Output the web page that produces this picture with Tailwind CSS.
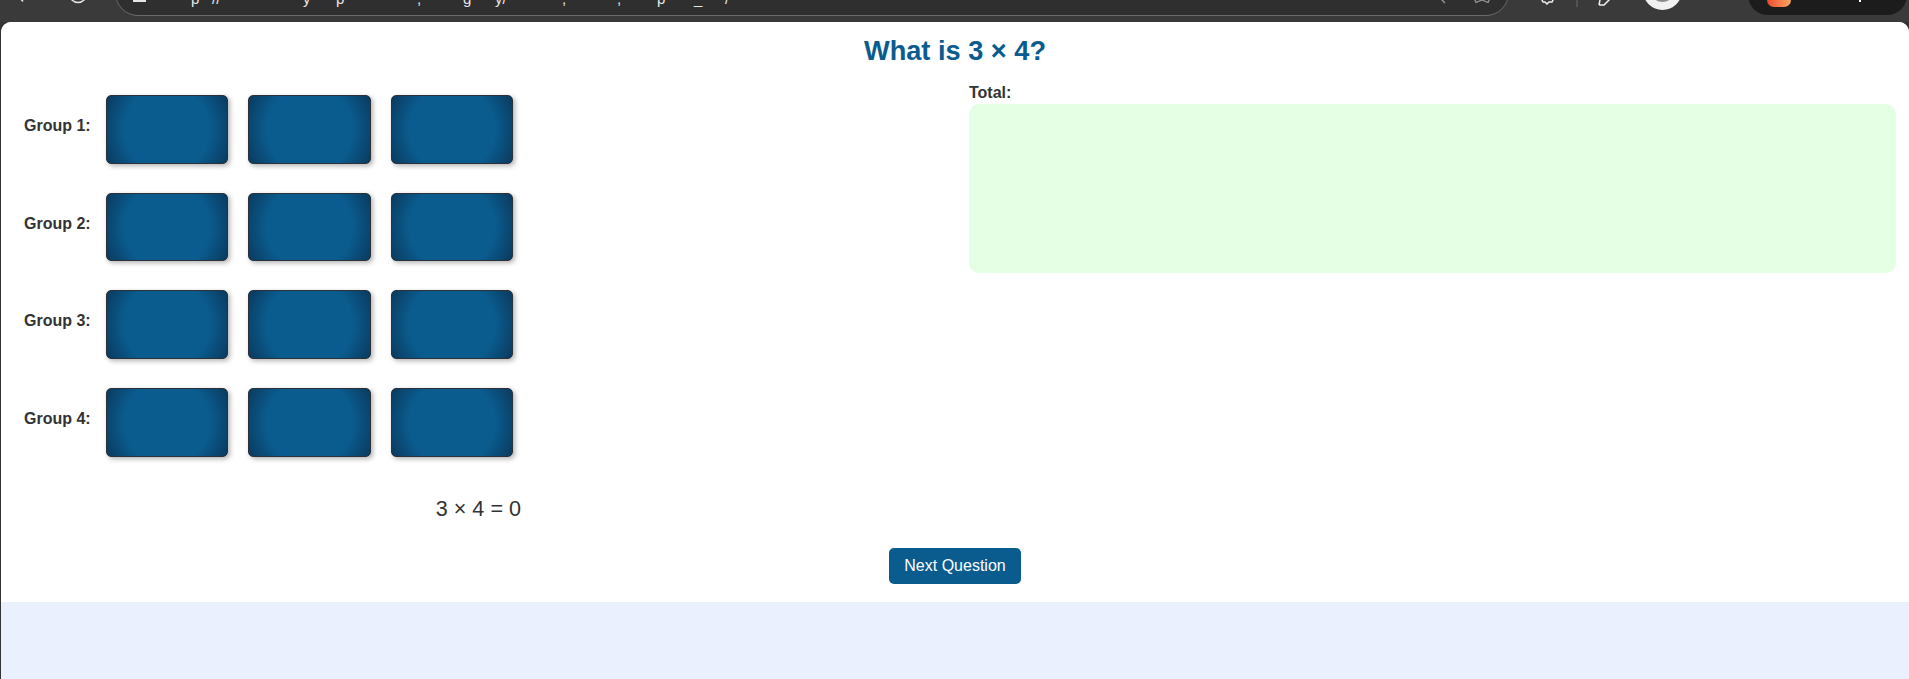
<!DOCTYPE html>
<html lang="en">
<head>
  <meta charset="UTF-8">
  <meta name="viewport" content="width=device-width, initial-scale=1.0">
  <title>What is 3 × 4?</title>
  <script src="https://cdn.jsdelivr.net/npm/@tailwindcss/browser@4"></script>
</head>
<body class="h-screen overflow-hidden flex flex-col bg-[#3a3a3a] font-['Liberation_Sans',Arial,sans-serif]">

  <!-- Browser toolbar, cut off by the top edge of the capture -->
  <div class="relative h-[22px] shrink-0 overflow-hidden bg-[#3a3a3a]">
    <!-- back / reload -->
    <svg class="absolute left-[14px] top-0" width="76" height="6" fill="none" stroke="#e8e8e8" stroke-width="1.5">
      <path d="M5 -3 L9 1.5" />
      <circle cx="64" cy="-6" r="8.5" />
    </svg>

    <!-- Address bar -->
    <div class="absolute left-[115px] top-[-30px] w-[1394px] h-[46px] rounded-[23px] border border-[#6b6b6b] bg-[#2f2f2f] overflow-hidden text-[#e6e6e6] text-[15px] leading-[20px]">
      <div class="absolute left-[17px] bottom-[13px] w-[13px] h-[2px] bg-[#e6e6e6]"></div>
      <span class="absolute left-[75px] bottom-[6px]">p</span>
      <span class="absolute left-[96px] bottom-[6px]">//</span>
      <span class="absolute left-[187px] bottom-[6px]">y</span>
      <span class="absolute left-[220px] bottom-[6px]">p</span>
      <span class="absolute left-[301px] bottom-[6px]">,</span>
      <span class="absolute left-[347px] bottom-[6px]">g</span>
      <span class="absolute left-[379px] bottom-[6px]">y/</span>
      <span class="absolute left-[446px] bottom-[6px]">,</span>
      <span class="absolute left-[501px] bottom-[6px]">,</span>
      <span class="absolute left-[541px] bottom-[6px]">p</span>
      <span class="absolute left-[578px] bottom-[6px]">_</span>
      <span class="absolute left-[609px] bottom-[6px]">/</span>
    </div>

    <!-- star and chevron at the end of the address bar -->
    <svg class="absolute left-[1436px] top-0" width="60" height="6" fill="none" stroke="#9a9a9a" stroke-width="1.3">
      <path d="M9 -3 L6 0 L9 3" />
      <path d="M38 -2 L40 2.5 L46 0 L52 2.5 L54 -2" />
    </svg>

    <!-- extension, divider, pen -->
    <svg class="absolute left-[1538px] top-0" width="80" height="8" fill="none" stroke="#f0f0f0" stroke-width="1.5">
      <path d="M3 -2 L5 2 L7 2 L9 4 L11 2 L14 2 L16 -2" />
      <path d="M39 -1 L39 7" stroke="#6d6d6d" stroke-width="1" />
      <path d="M61 5 L66 5 L72 -1 M61 5 L62 0" />
    </svg>

    <!-- Profile picture -->
    <div class="absolute left-[1643px] top-[-29px] w-[39px] h-[39px] rounded-full bg-[#f1f1f1] flex items-center justify-center">
      <div class="w-[25px] h-[25px] mt-[-3px] rounded-full bg-[#8c8c8c]"></div>
    </div>

    <!-- Dark pill on the far right -->
    <div class="absolute left-[1748px] top-[-30px] w-[159px] h-[45px] rounded-[20px] bg-[#1c1c1c]">
      <div class="absolute left-[19px] bottom-[8px] w-[24px] h-[12px] rounded-b-[7px] bg-gradient-to-r from-[#ea4b2a] via-[#f9784a] to-[#f7a75c]"></div>
      <div class="absolute left-[111px] bottom-[13px] w-[2px] h-[4px] bg-white"></div>
    </div>
  </div>

  <!-- Page area -->
  <div class="flex-1 pl-px bg-[#333333]">
    <div class="h-full rounded-t-[10px] overflow-hidden bg-[#ebf0fe]">
      <div class="h-[580px] bg-white pt-[13px] text-[#333333]">
        <h1 class="text-center text-[27.2px] leading-[31px] font-bold text-[#0a5c8f]">What is 3 × 4?</h1>

        <div class="flex mt-[18px] pl-[23px] pr-[13px]">
          <!-- Groups of cards -->
          <div class="w-[945px] shrink-0">
            <div class="w-[497px] pt-[11px]">
              <div class="flex flex-col gap-[29px]">
                <div class="flex">
                  <div class="w-[82px] pt-[22px] text-base leading-[18px] font-bold">Group 1:</div>
                  <div class="flex gap-5">
                    <div class="w-[122.33px] h-[68.67px] rounded-[5px] border border-[#2b3138] shadow-[2px_2px_5px_rgba(0,0,0,0.3)] bg-[radial-gradient(circle,#0a5c8f_62%,#0a3a5e_100%)]"></div>
                    <div class="w-[122.33px] h-[68.67px] rounded-[5px] border border-[#2b3138] shadow-[2px_2px_5px_rgba(0,0,0,0.3)] bg-[radial-gradient(circle,#0a5c8f_62%,#0a3a5e_100%)]"></div>
                    <div class="w-[122.33px] h-[68.67px] rounded-[5px] border border-[#2b3138] shadow-[2px_2px_5px_rgba(0,0,0,0.3)] bg-[radial-gradient(circle,#0a5c8f_62%,#0a3a5e_100%)]"></div>
                  </div>
                </div>
                <div class="flex">
                  <div class="w-[82px] pt-[22px] text-base leading-[18px] font-bold">Group 2:</div>
                  <div class="flex gap-5">
                    <div class="w-[122.33px] h-[68.67px] rounded-[5px] border border-[#2b3138] shadow-[2px_2px_5px_rgba(0,0,0,0.3)] bg-[radial-gradient(circle,#0a5c8f_62%,#0a3a5e_100%)]"></div>
                    <div class="w-[122.33px] h-[68.67px] rounded-[5px] border border-[#2b3138] shadow-[2px_2px_5px_rgba(0,0,0,0.3)] bg-[radial-gradient(circle,#0a5c8f_62%,#0a3a5e_100%)]"></div>
                    <div class="w-[122.33px] h-[68.67px] rounded-[5px] border border-[#2b3138] shadow-[2px_2px_5px_rgba(0,0,0,0.3)] bg-[radial-gradient(circle,#0a5c8f_62%,#0a3a5e_100%)]"></div>
                  </div>
                </div>
                <div class="flex">
                  <div class="w-[82px] pt-[22px] text-base leading-[18px] font-bold">Group 3:</div>
                  <div class="flex gap-5">
                    <div class="w-[122.33px] h-[68.67px] rounded-[5px] border border-[#2b3138] shadow-[2px_2px_5px_rgba(0,0,0,0.3)] bg-[radial-gradient(circle,#0a5c8f_62%,#0a3a5e_100%)]"></div>
                    <div class="w-[122.33px] h-[68.67px] rounded-[5px] border border-[#2b3138] shadow-[2px_2px_5px_rgba(0,0,0,0.3)] bg-[radial-gradient(circle,#0a5c8f_62%,#0a3a5e_100%)]"></div>
                    <div class="w-[122.33px] h-[68.67px] rounded-[5px] border border-[#2b3138] shadow-[2px_2px_5px_rgba(0,0,0,0.3)] bg-[radial-gradient(circle,#0a5c8f_62%,#0a3a5e_100%)]"></div>
                  </div>
                </div>
                <div class="flex">
                  <div class="w-[82px] pt-[22px] text-base leading-[18px] font-bold">Group 4:</div>
                  <div class="flex gap-5">
                    <div class="w-[122.33px] h-[68.67px] rounded-[5px] border border-[#2b3138] shadow-[2px_2px_5px_rgba(0,0,0,0.3)] bg-[radial-gradient(circle,#0a5c8f_62%,#0a3a5e_100%)]"></div>
                    <div class="w-[122.33px] h-[68.67px] rounded-[5px] border border-[#2b3138] shadow-[2px_2px_5px_rgba(0,0,0,0.3)] bg-[radial-gradient(circle,#0a5c8f_62%,#0a3a5e_100%)]"></div>
                    <div class="w-[122.33px] h-[68.67px] rounded-[5px] border border-[#2b3138] shadow-[2px_2px_5px_rgba(0,0,0,0.3)] bg-[radial-gradient(circle,#0a5c8f_62%,#0a3a5e_100%)]"></div>
                  </div>
                </div>
              </div>
              <div class="mt-[40px] text-right text-[21.6px] leading-[24px]">3 × 4 = 0</div>
            </div>
          </div>

          <!-- Total -->
          <div class="flex-1">
            <div class="text-base leading-[18px] font-bold">Total:</div>
            <div class="mt-[2px] h-[169px] rounded-[10px] bg-[#e5ffe5]"></div>
          </div>
        </div>

        <div class="flex justify-center mt-[27px]">
          <button type="button" class="h-9 px-[15px] rounded-[5px] bg-[#0a5c8f] text-white text-base">Next Question</button>
        </div>
      </div>
    </div>
  </div>
</body>
</html>
